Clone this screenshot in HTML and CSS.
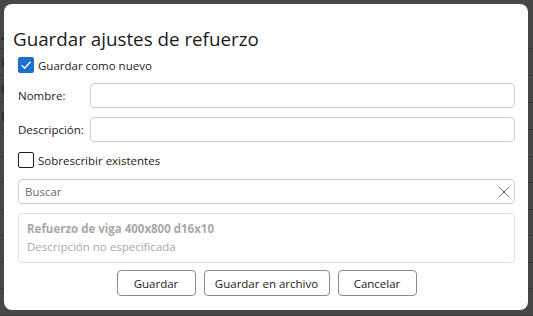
FILE: index.html
```html
<!DOCTYPE html>
<html lang="es">
<head>
  <meta charset="UTF-8" />
  <meta name="viewport" content="width=device-width, initial-scale=1.0" />
  <title>Guardar ajustes de refuerzo</title>
  <link rel="stylesheet" href="styles.css">
</head>
<body>
  <div class="backdrop">
    <div class="bg-row"><span>a</span></div>
    <div class="bg-row"><span>F</span></div>
    <div class="bg-row"><span>F</span></div>
    <div class="bg-row"><span>F</span></div>
    <div class="bg-row"><span></span></div>
    <div class="bg-row"><span></span></div>
    <div class="bg-row"><span></span></div>
    <div class="bg-row"><span></span></div>
    <div class="bg-row"><span></span></div>
    <div class="bg-row"><span></span></div>
    <div class="bg-row"><span></span></div>
  </div>

  <div class="dialog">
    <div class="dialog-title">Guardar ajustes de refuerzo</div>

    <label class="check-row">
      <span class="check checked">
        <svg viewBox="0 0 16 16" width="16" height="16"><path d="M3 8.2 L6.4 11.6 L13.2 4.4" fill="none" stroke="#fff" stroke-width="1.6"/></svg>
      </span>
      Guardar como nuevo
    </label>

    <div class="field-row">
      <span class="field-label">Nombre:</span>
      <div class="input"></div>
    </div>
    <div class="field-row">
      <span class="field-label">Descripción:</span>
      <div class="input"></div>
    </div>

    <label class="check-row overwrite">
      <span class="check"></span>
      Sobrescribir existentes
    </label>

    <div class="input search">
      <span class="placeholder">Buscar</span>
      <svg class="clear" viewBox="0 0 12 12" width="12" height="12"><path d="M1 1 L11 11 M11 1 L1 11" stroke="#6a6a6a" stroke-width="1" fill="none"/></svg>
    </div>

    <div class="list">
      <div class="item-name">Refuerzo de viga 400x800 d16x10</div>
      <div class="item-desc">Descripción no especificada</div>
    </div>

    <div class="buttons">
      <button class="btn">Guardar</button>
      <button class="btn wide">Guardar en archivo</button>
      <button class="btn">Cancelar</button>
    </div>
  </div>
</body>
</html>
```

FILE: styles.css
```css
body {
  margin: 0;
  width: 533px;
  height: 316px;
  overflow: hidden;
  position: relative;
  background-color: #474747;
  font-family: "Open Sans", "Noto Sans", sans-serif;
  color: #1b1b1b;
}

.backdrop {
  position: absolute;
  inset: 0;
  display: flex;
  flex-direction: column;
  padding-top: 22px;
}

.bg-row {
  height: 26px;
  border-bottom: 1px solid #3a3a3a;
  font-size: 13px;
  color: #222;
  padding-left: 1px;
  line-height: 26px;
}

.dialog {
  position: absolute;
  left: 4px;
  top: 4px;
  width: 524px;
  height: 306px;
  box-sizing: border-box;
  background: #ffffff;
  border-radius: 8px;
  padding: 22px 13px 0 14px;
  display: flex;
  flex-direction: column;
}

.dialog-title {
  font-size: 18.8px;
  line-height: 26px;
  color: #1b1b1b;
  margin-left: -5px;
}

.check-row {
  display: flex;
  align-items: center;
  gap: 4px;
  font-size: 11.5px;
  height: 16px;
  margin-top: 5px;
}

.check {
  width: 14px;
  height: 14px;
  border: 1px solid #1f1f1f;
  border-radius: 2px;
  display: flex;
  align-items: center;
  justify-content: center;
}

.check.checked {
  background: #1a6fd1;
  border-color: #1a6fd1;
}

.field-row {
  display: flex;
  align-items: center;
  font-size: 11.5px;
  margin-top: 10px;
}

.field-row + .field-row {
  margin-top: 9px;
}

.field-label {
  width: 72px;
}

.input {
  flex: 1;
  height: 25px;
  box-sizing: border-box;
  border: 1px solid #cfcfcf;
  border-radius: 4px;
}

.overwrite {
  margin-top: 10px;
}

.search {
  flex: none;
  margin-top: 11px;
  display: flex;
  align-items: center;
  justify-content: space-between;
  padding: 0 4px 0 6px;
  font-size: 11.5px;
}

.placeholder {
  color: #6b6b6b;
}

.list {
  margin-top: 9px;
  height: 50px;
  box-sizing: border-box;
  border: 1px solid #e2e2e2;
  border-radius: 4px;
  padding: 6px 8px;
  font-size: 11.5px;
  color: #a8a8a8;
}

.item-name {
  font-weight: bold;
  line-height: 17px;
}

.item-desc {
  line-height: 19px;
}

.buttons {
  display: flex;
  justify-content: center;
  gap: 8px;
  margin-top: 7px;
}

.btn {
  width: 79px;
  height: 26px;
  padding: 0;
  font-family: inherit;
  font-size: 11.5px;
  color: #1b1b1b;
  background: #ffffff;
  border: 1px solid #8a8a8a;
  border-radius: 4px;
}

.btn.wide {
  width: 126px;
}
```
